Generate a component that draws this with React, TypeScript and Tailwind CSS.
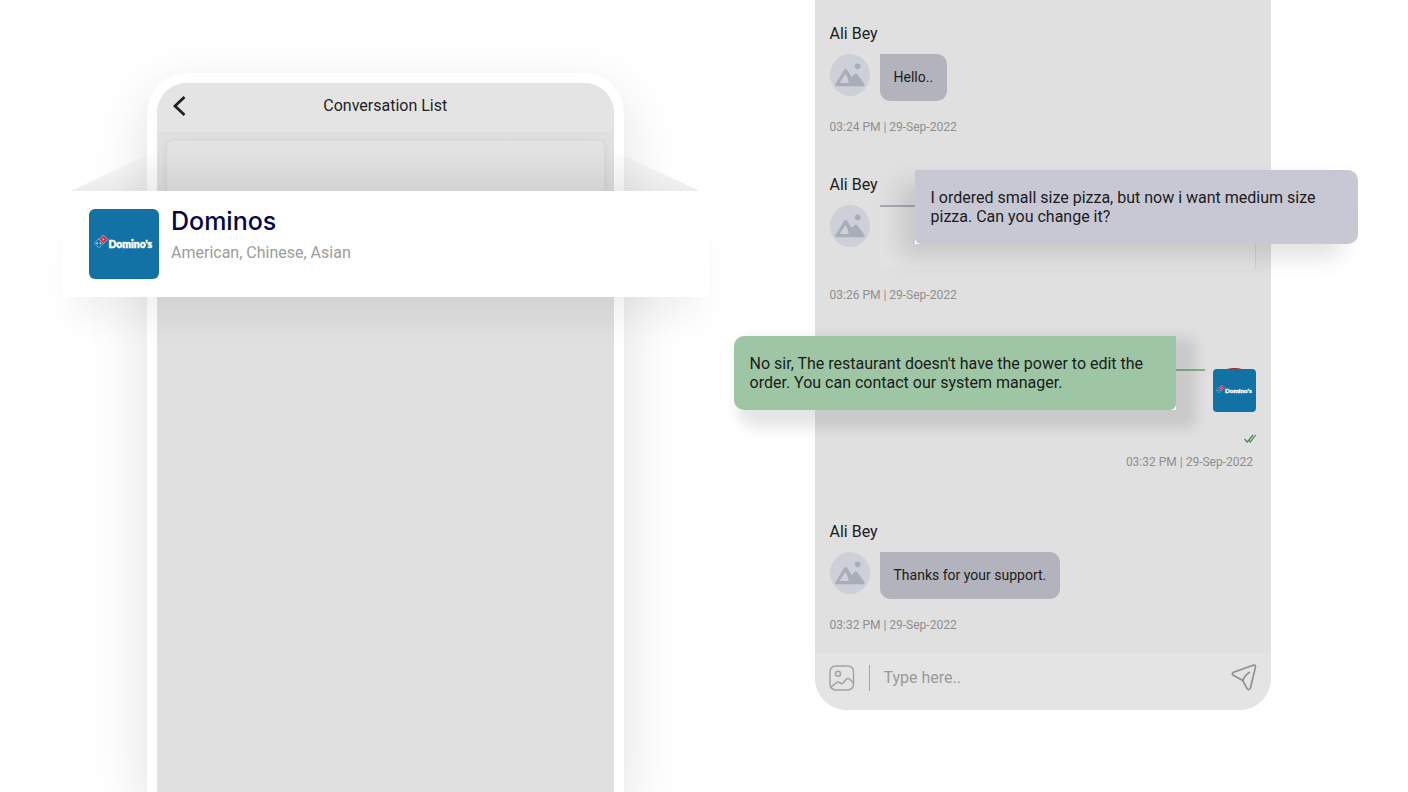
import React from "react";

interface ReceivedProps {
  name: string;
  time: string;
  children: React.ReactNode;
}

const DominosLogo: React.FC<{ className?: string }> = ({ className }) => (
  <svg viewBox="0 0 70 70" className={className} role="img" aria-label="Domino's">
    <rect width="70" height="70" fill="#1272a5" />
    <path
      d="M9.8 29.8 5.2 34.4 9.8 39 14.4 34.4Z"
      fill="#1272a5"
      stroke="#d5e6f0"
      strokeWidth="0.8"
      strokeDasharray="1.4 0.7"
    />
    <circle cx="8.2" cy="34.4" r="0.8" fill="#fff" />
    <circle cx="11.4" cy="34.4" r="0.8" fill="#fff" />
    <path d="M14.4 26.2 10.2 30.4 14.4 34.6 18.6 30.4Z" fill="#e31b3d" stroke="#f0d5de" strokeWidth="0.6" />
    <circle cx="14.4" cy="30.4" r="0.9" fill="#fff" />
    <text
      x="19.5"
      y="38.7"
      fill="#fff"
      stroke="#fff"
      strokeWidth="0.5"
      fontFamily="Lato, sans-serif"
      fontWeight="900"
      fontSize="10.4"
    >
      Domino's
    </text>
  </svg>
);

const Avatar = () => (
  <svg viewBox="0 0 120 126" className="h-[42px] w-10 shrink-0" aria-hidden="true">
    <ellipse cx="60" cy="63" rx="60" ry="63" fill="#cdd0d9" />
    <circle cx="83" cy="37" r="8.5" fill="#a9adb8" />
    <path
      fillRule="evenodd"
      fill="#a9adb8"
      d="M18 97C15 97 14 94 16 91L42 48Q47 42 52 48L65 69 74 60Q78 56 82 61L103 90C105 94 104 97 101 97ZM29 87H56L53 72 46 60Z"
    />
  </svg>
);

const DoubleTick = () => (
  <svg viewBox="0 0 12 9" className="h-[9px] w-3" fill="none" stroke="#3f8a4c" strokeWidth="1.2" aria-hidden="true">
    <path d="M0.5 5 3.3 8 9 1" />
    <path d="M5 6.4 6.3 8 11.6 1" />
  </svg>
);

const Received: React.FC<ReceivedProps> = ({ name, time, children }) => (
  <li>
    <h2 className="text-base leading-5 text-[#1b1b1b]">{name}</h2>
    <div className="mt-2.5 flex items-start gap-2.5">
      <Avatar />
      {children}
    </div>
    <time className="mt-4 block text-xs leading-5 text-[#8f8f8f]">{time}</time>
  </li>
);

const Bubble: React.FC<{ text: string }> = ({ text }) => (
  <p className="rounded-[10px] rounded-tl-none bg-[#b3b3bd] px-3.5 py-3.5 text-sm leading-[19px] text-[#1b1b1b]">
    {text}
  </p>
);

const ConversationList = () => (
  <section className="flex min-w-0 flex-[476] flex-col pt-[73px]">
    <div className="flex-1 rounded-t-[40px] border-x-10 border-t-10 border-white bg-[#e0e0e0] shadow-[0_20px_60px_rgba(0,0,0,0.13)]">
      <header className="flex h-[49px] items-center rounded-t-[30px] bg-[#e4e4e4] px-3.5 pb-1">
        <button type="button" aria-label="Back">
          <svg viewBox="0 0 16 22" className="h-[22px] w-4" fill="none" stroke="#1f1f1f" strokeWidth="2.8">
            <path d="M13.5 2 4 11 13.5 20" />
          </svg>
        </button>
        <h1 className="flex-1 pr-4 text-center text-base text-[#1f1f1f]">Conversation List</h1>
      </header>
      <ul className="px-2.5 pt-[9px]">
        <li className="relative h-[150px] rounded-md bg-[#e4e4e4] shadow-[0_0_6px_rgba(0,0,0,0.08)]">
          <svg
            viewBox="0 0 628 71"
            preserveAspectRatio="none"
            className="absolute -inset-x-24 -top-[21px] h-[71px] w-[calc(100%+192px)]"
            aria-hidden="true"
          >
            <defs>
              <linearGradient id="lift" x1="0" y1="0" x2="0" y2="1">
                <stop offset="0.2" stopColor="#000" stopOpacity="0" />
                <stop offset="0.5" stopColor="#000" stopOpacity="0.015" />
                <stop offset="1" stopColor="#000" stopOpacity="0.075" />
              </linearGradient>
            </defs>
            <path d="M0 71 150 0H478L628 71Z" fill="url(#lift)" />
          </svg>
          <a
            href="#dominos"
            className="absolute -inset-x-[105px] top-[50px] flex items-start gap-3 rounded-b bg-white px-[27px] py-[18px] shadow-[0_34px_36px_-12px_rgba(0,0,0,0.06)]"
          >
            <DominosLogo className="size-[70px] shrink-0 rounded-md" />
            <span className="flex flex-col">
              <span className="font-[Inter,sans-serif] text-[25px] leading-6 font-medium text-[#04044a]">Dominos</span>
              <span className="mt-2 text-base leading-6 text-[#9c9c9c]">American, Chinese, Asian</span>
            </span>
          </a>
        </li>
      </ul>
    </div>
  </section>
);

const Conversation = () => (
  <section className="min-w-0 flex-[456] self-start rounded-b-[32px] bg-[#e0e0e0]">
    <ol className="px-[15px] pt-6 pb-[18px]">
      <Received name="Ali Bey" time="03:24 PM | 29-Sep-2022">
        <Bubble text="Hello.." />
      </Received>

      <li className="h-[38px]" aria-hidden="true" />

      <Received name="Ali Bey" time="03:26 PM | 29-Sep-2022">
        <div className="relative h-16 flex-1 border-t-2 border-r border-t-[#a9a9b6] border-r-[#cfcfcf] bg-[#e3e3e3]">
          <div className="absolute -top-[37px] -right-[103px] left-[35px] rounded-r-[10px] bg-white shadow-[-16px_13px_24px_rgba(0,0,0,0.12)]">
            <p className="rounded-r-[10px] rounded-bl-md bg-[#c8c8d4] px-4 py-[18px] text-base leading-[19px] text-[#1b1b1b]">
              I ordered small size pizza, but now i want medium size pizza. Can you change it?
            </p>
          </div>
        </div>
      </Received>

      <li className="mt-16 mb-[50px] flex flex-col items-end">
        <div className="flex w-full items-start gap-2">
          <div className="relative h-[61px] flex-1 border-t-2 border-[#86b08d]">
            <div className="absolute -top-[35px] right-[29px] -left-24 rounded-l-[10px] bg-white shadow-[12px_10px_14px_8px_rgba(0,0,0,0.1)]">
              <p className="rounded-l-[10px] rounded-br-md bg-[#9ec6a5] px-4 py-[18px] text-base leading-[19px] text-[#1b1b1b]">
                No sir, The restaurant doesn't have the power to edit the order. You can contact our system manager.
              </p>
            </div>
          </div>
          <div className="relative">
            <span className="absolute inset-x-0 -top-px h-10 rounded-full bg-[#a8281e]" />
            <DominosLogo className="relative size-[43px] rounded" />
          </div>
        </div>
        <div className="mt-1">
          <DoubleTick />
        </div>
        <time className="mt-[9px] pr-[3px] text-xs leading-5 text-[#8f8f8f]">03:32 PM | 29-Sep-2022</time>
      </li>

      <Received name="Ali Bey" time="03:32 PM | 29-Sep-2022">
        <Bubble text="Thanks for your support." />
      </Received>
    </ol>

    <form className="flex h-[57px] items-center rounded-b-[32px] bg-[#e4e4e4] px-3.5 pb-2">
      <button type="button" aria-label="Add image">
        <svg viewBox="0 0 26 26" className="size-[26px]" fill="none" stroke="#a3a3a3" strokeWidth="1.5">
          <rect x="1" y="1" width="23.5" height="24" rx="5.5" />
          <circle cx="9" cy="8.7" r="2.5" />
          <path d="M2 22 7 18Q8.5 16.5 10.5 17.5L12 18.5Q13.5 19 14.5 17.5L17 14.5Q19 12.5 21 14.5L24.5 18" />
        </svg>
      </button>
      <span className="ml-3.5 h-[26px] w-px bg-[#a3a3a3]" />
      <input
        type="text"
        aria-label="Message"
        placeholder="Type here.."
        className="ml-3.5 min-w-0 flex-1 bg-transparent text-base text-[#1b1b1b] outline-none placeholder:text-[#9a9a9a]"
      />
      <button type="submit" aria-label="Send">
        <svg
          viewBox="0 0 26 27"
          className="h-[27px] w-[26px]"
          fill="none"
          stroke="#909090"
          strokeWidth="1.7"
          strokeLinejoin="round"
          strokeLinecap="round"
        >
          <path d="M2.6 8.2 22 1.3Q24.9 0.6 24.4 3.4L19.4 24Q18 27.2 16 24.6L11.8 16.6 2.2 11.2Q0.2 9.4 2.6 8.2Z" />
          <path d="M11.8 16.6Q14 10.8 18.4 8.4" />
        </svg>
      </button>
    </form>
  </section>
);

const App = () => (
  <main className="flex min-h-screen gap-[191px] overflow-hidden bg-white pr-[137px] pl-[147px] font-[Roboto,sans-serif]">
    <ConversationList />
    <Conversation />
  </main>
);

export default App;
